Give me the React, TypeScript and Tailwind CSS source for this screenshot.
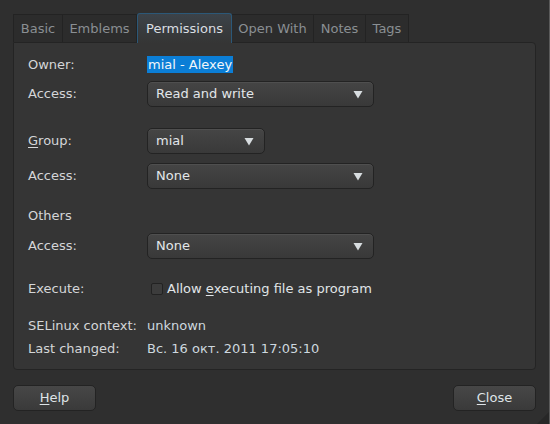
import React from 'react';

const font = { fontFamily: '"DejaVu Sans", sans-serif' };

const TABS = [
  { label: 'Basic', w: 'w-[50px]' },
  { label: 'Emblems', w: 'w-[74px]' },
  { label: 'Permissions', w: 'w-[95px]', active: true },
  { label: 'Open With', w: 'w-[82px]' },
  { label: 'Notes', w: 'w-[52px]' },
  { label: 'Tags', w: 'w-[43px]' },
];

function Arrow() {
  return (
    <svg width="10" height="9" viewBox="0 0 10 9" className="shrink-0">
      <path d="M0.5 1 L9.5 1 L5 8.5 Z" fill="#d8dde0" />
    </svg>
  );
}

function Combo({ value, w }: { value: string; w: string }) {
  return (
    <div
      className={`${w} h-[26px] flex items-center justify-between pl-[8px] pr-[10px] rounded-[5px] border border-[#232323] bg-gradient-to-b from-[#454545] to-[#393939] shadow-[inset_0_1px_0_rgba(255,255,255,0.06)] text-[#e2e6e9]`}
    >
      <span>{value}</span>
      <Arrow />
    </div>
  );
}

function Row({ label, children, className = '' }: { label: React.ReactNode; children?: React.ReactNode; className?: string }) {
  return (
    <div className={`flex items-center ${className}`}>
      <div className="w-[119px] shrink-0">{label}</div>
      {children}
    </div>
  );
}

function Button({ children }: { children: React.ReactNode }) {
  return (
    <div className="w-[83px] h-[26px] flex items-center justify-center rounded-[5px] border border-[#232323] bg-gradient-to-b from-[#474747] to-[#3a3a3a] text-[#dfe4e7]">
      {children}
    </div>
  );
}

export default function App() {
  return (
    <div className="w-[550px] h-[424px] flex bg-[#2f2f2f] text-[13px] text-[#d4d6d8]" style={font}>
      <div className="flex-1 flex flex-col pl-[13px] pr-[13px] pt-[13px] relative">
        {/* tabs */}
        <div className="flex items-end h-[29px]">
          {TABS.map((t) =>
            t.active ? (
              <div
                key={t.label}
                className={`${t.w} h-[30px] flex items-center justify-center rounded-t-[3px] border border-b-0 border-[#2c5878] bg-gradient-to-b from-[#3c4349] to-[#353535] text-[#d9dee2] -mb-px z-10`}
              >
                {t.label}
              </div>
            ) : (
              <div
                key={t.label}
                className={`${t.w} h-[28px] flex items-center justify-center border border-b-0 border-l-0 first:border-l border-[#232323] bg-[#2c2c2c] text-[#8a8f93]`}
              >
                {t.label}
              </div>
            )
          )}
        </div>
        {/* page */}
        <div className="h-[328px] rounded-b-[4px] rounded-tr-[4px] border border-[#242424] bg-[#353535] pl-[14px] pt-[12px] flex flex-col">
          <Row label="Owner:" className="h-[19px]">
            <span className="bg-[#0b7ed6] text-[#f2f6fa] px-[1px] leading-[17px]">mial - Alexey</span>
          </Row>
          <Row label="Access:" className="mt-[7px] h-[26px]">
            <Combo value="Read and write" w="w-[227px]" />
          </Row>
          <Row
            label={
              <span>
                <span className="underline underline-offset-2">G</span>roup:
              </span>
            }
            className="mt-[21px] h-[26px]"
          >
            <Combo value="mial" w="w-[118px]" />
          </Row>
          <Row label="Access:" className="mt-[9px] h-[26px]">
            <Combo value="None" w="w-[227px]" />
          </Row>
          <div className="mt-[17px] h-[19px] flex items-center">Others</div>
          <Row label="Access:" className="mt-[8px] h-[26px]">
            <Combo value="None" w="w-[227px]" />
          </Row>
          <Row label="Execute:" className="mt-[20px] h-[20px]">
            <div className="flex items-center">
              <div className="w-[12px] h-[12px] ml-[4px] mr-[4px] rounded-[2px] border border-[#222] bg-[#3c3c3c]" />
              <span className="text-[#e0e5e8]">
                Allow <span className="underline underline-offset-2">e</span>xecuting file as program
              </span>
            </div>
          </Row>
          <Row label="SELinux context:" className="mt-[17px] h-[20px]">
            <span className="text-[#cdd8df]">unknown</span>
          </Row>
          <Row label="Last changed:" className="mt-[3px] h-[20px]">
            <span className="text-[#cdd8df]">Вс. 16 окт. 2011 17:05:10</span>
          </Row>
        </div>
        {/* buttons */}
        <div className="flex justify-between mt-[15px]">
          <Button>
            <span>
              <span className="underline underline-offset-2">H</span>elp
            </span>
          </Button>
          <Button>
            <span>
              <span className="underline underline-offset-2">C</span>lose
            </span>
          </Button>
        </div>
        <svg width="12" height="12" className="absolute right-0 bottom-0" viewBox="0 0 12 12">
          <path d="M12 0 L12 12 L0 12 Z" fill="#272727" />
        </svg>
      </div>
      <div className="w-px bg-[#5a5a5a]" />
    </div>
  );
}
